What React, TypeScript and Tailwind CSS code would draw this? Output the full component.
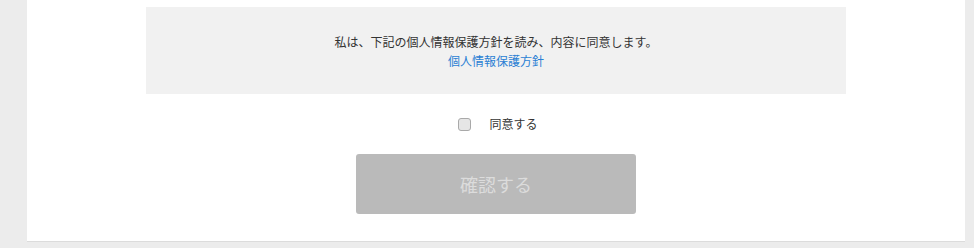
import React from "react";

const font = { fontFamily: '"Noto Sans CJK JP", "Noto Sans", sans-serif' };

const App: React.FC = () => {
  return (
    <div className="w-[974px] h-[248px] bg-[#ececec] overflow-hidden" style={font}>
      <div className="ml-[27px] w-[938px] bg-white pt-[7px] pb-[27px] shadow-[0_1px_0_#dcdcdc]">
        {/* consent text */}
        <div className="mx-auto w-[700px] h-[87px] bg-[#f1f1f1] flex flex-col items-center justify-center text-[12px] leading-[19px]">
          <p className="text-[#333]">
            私は、下記の個人情報保護方針を読み、内容に同意します。
          </p>
          <a className="text-[#2a7fd4] cursor-pointer">個人情報保護方針</a>
        </div>

        {/* agree */}
        <div className="flex items-center justify-center h-[60px] pl-[4px]">
          <label className="flex items-center gap-[18px] text-[12px] text-[#333]">
            <span className="w-[13px] h-[13px] rounded-[3px] border border-[#a9a9a9] bg-[#e6e6e6]" />
            同意する
          </label>
        </div>

        <div className="flex justify-center">
          <button className="w-[280px] h-[60px] rounded-[3px] bg-[#bababa] text-[18px] text-[#dcdcdc]">
            確認する
          </button>
        </div>
      </div>
    </div>
  );
};

export default App;
